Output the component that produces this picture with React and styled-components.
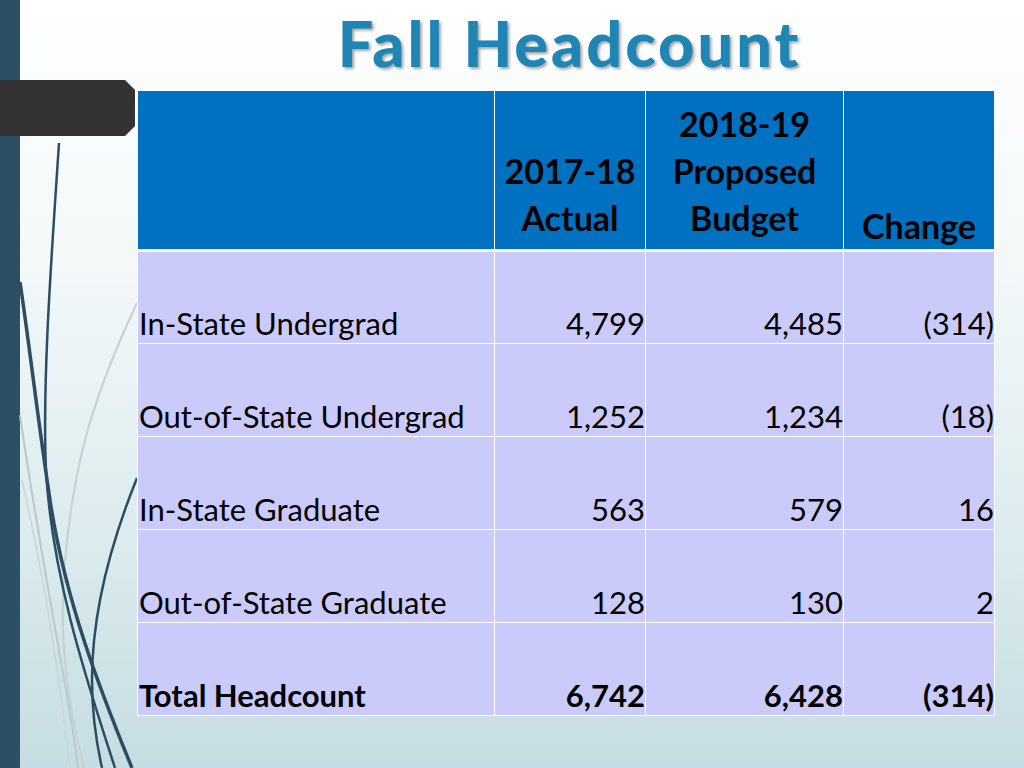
import React from 'react';
import styled, {createGlobalStyle} from 'styled-components';

const GlobalStyle = createGlobalStyle`
    html, body {
        margin: 0;
        padding: 0;
        background: #ffffff;
    }
    * {
        box-sizing: border-box;
    }
`;

const Slide = styled.div`
    position: relative;
    width: 1024px;
    height: 768px;
    overflow: hidden;
    display: flex;
    background: linear-gradient(180deg, #ffffff 0%, #f3f8f9 35%, #dcebee 70%, #c5dde2 100%);
    font-family: Lato, "Open Sans", sans-serif;
`;

const SideBar = styled.div`
    width: 20px;
    flex: none;
    background: #2d4f66;
`;

// dark tab that sits over the side bar
const Tab = styled.div`
    position: absolute;
    left: 0;
    top: 80px;
    width: 135px;
    height: 56px;
    background: #333333;
    clip-path: polygon(0 0, 125px 0, 135px 10px, 135px 46px, 125px 56px, 0 56px);
    z-index: 2;
`;

const Decor = styled.svg`
    position: absolute;
    left: 0;
    top: 0;
    z-index: 0;
`;

const Content = styled.main`
    position: relative;
    z-index: 1;
    flex: 1;
    display: flex;
    flex-direction: column;
    padding-left: 117px;
`;

const TitleBar = styled.header`
    height: 90px;
    width: 857px;
    display: flex;
    justify-content: center;
    padding-left: 8px;
`;

const Title = styled.h1`
    margin: 0;
    padding-top: 10px;
    font-family: Lato, "Open Sans", sans-serif;
    font-weight: 900;
    font-size: 63px;
    line-height: 66px;
    letter-spacing: 3px;
    color: #1f85b4;
    text-shadow: 2px 2px 3px rgba(0, 0, 0, 0.35);
`;

const Table = styled.table`
    width: 857px;
    border-collapse: collapse;
    table-layout: fixed;
`;

const HeadCell = styled.th`
    background: #0070c0;
    color: #000000;
    font-weight: 700;
    font-size: 34px;
    line-height: 47px;
    text-align: center;
    vertical-align: bottom;
    height: 160px;
    padding: 0 0 ${({low}) => (low ? '0' : '8px')};
    border: 1px solid #ffffff;
    border-bottom: 3px solid #ffffff;
`;

const Cell = styled.td`
    background: #cbcbfb;
    color: #000000;
    font-size: 31px;
    font-weight: ${({bold}) => (bold ? 700 : 400)};
    line-height: 34px;
    text-align: ${({num}) => (num ? 'right' : 'left')};
    vertical-align: bottom;
    height: 93px;
    padding: 0 0 3px 1px;
    border: 1px solid #ffffff;
`;

const rows = [
    {label: 'In-State Undergrad', actual: '4,799', budget: '4,485', change: '(314)'},
    {label: 'Out-of-State Undergrad', actual: '1,252', budget: '1,234', change: '(18)'},
    {label: 'In-State Graduate', actual: '563', budget: '579', change: '16'},
    {label: 'Out-of-State Graduate', actual: '128', budget: '130', change: '2'},
    {label: 'Total Headcount', actual: '6,742', budget: '6,428', change: '(314)', bold: true},
];

const App = () => (
    <>
        <GlobalStyle/>
        <Slide>
            <Decor width="140" height="768" viewBox="0 0 140 768" fill="none">
                <path d="M137,303 C110,360 88,420 78,470 C66,530 60,590 64,650 C68,705 78,745 84,768" stroke="#c3d0d4" strokeWidth="2"/>
                <path d="M20,415 C32,500 50,600 66,690 C72,725 76,750 78,768" stroke="#b9c9ce" strokeWidth="2"/>
                <path d="M22,480 C40,560 55,640 70,768" stroke="#c8d5d9" strokeWidth="1.5"/>
                <path d="M59,143 C52,250 42,380 46,470 C52,580 90,690 115,768" stroke="#2c4d63" strokeWidth="2.5"/>
                <path d="M20,282 C30,350 38,420 50,500 C65,600 100,690 132,768" stroke="#2c4d63" strokeWidth="3.5"/>
                <path d="M137,478 C112,540 92,610 92,680 C92,720 98,750 102,768" stroke="#2c4d63" strokeWidth="2.5"/>
            </Decor>
            <SideBar/>
            <Tab/>
            <Content>
                <TitleBar>
                    <Title>Fall Headcount</Title>
                </TitleBar>
                <Table>
                    <colgroup>
                        <col style={{width: 357}}/>
                        <col style={{width: 151}}/>
                        <col style={{width: 198}}/>
                        <col style={{width: 151}}/>
                    </colgroup>
                    <thead>
                        <tr>
                            <HeadCell/>
                            <HeadCell>2017-18<br/>Actual</HeadCell>
                            <HeadCell>2018-19<br/>Proposed<br/>Budget</HeadCell>
                            <HeadCell low>Change</HeadCell>
                        </tr>
                    </thead>
                    <tbody>
                        {rows.map(({label, actual, budget, change, bold}) => (
                            <tr key={label}>
                                <Cell bold={bold}>{label}</Cell>
                                <Cell num bold={bold}>{actual}</Cell>
                                <Cell num bold={bold}>{budget}</Cell>
                                <Cell num bold={bold}>{change}</Cell>
                            </tr>
                        ))}
                    </tbody>
                </Table>
            </Content>
        </Slide>
    </>
);

export default App;
